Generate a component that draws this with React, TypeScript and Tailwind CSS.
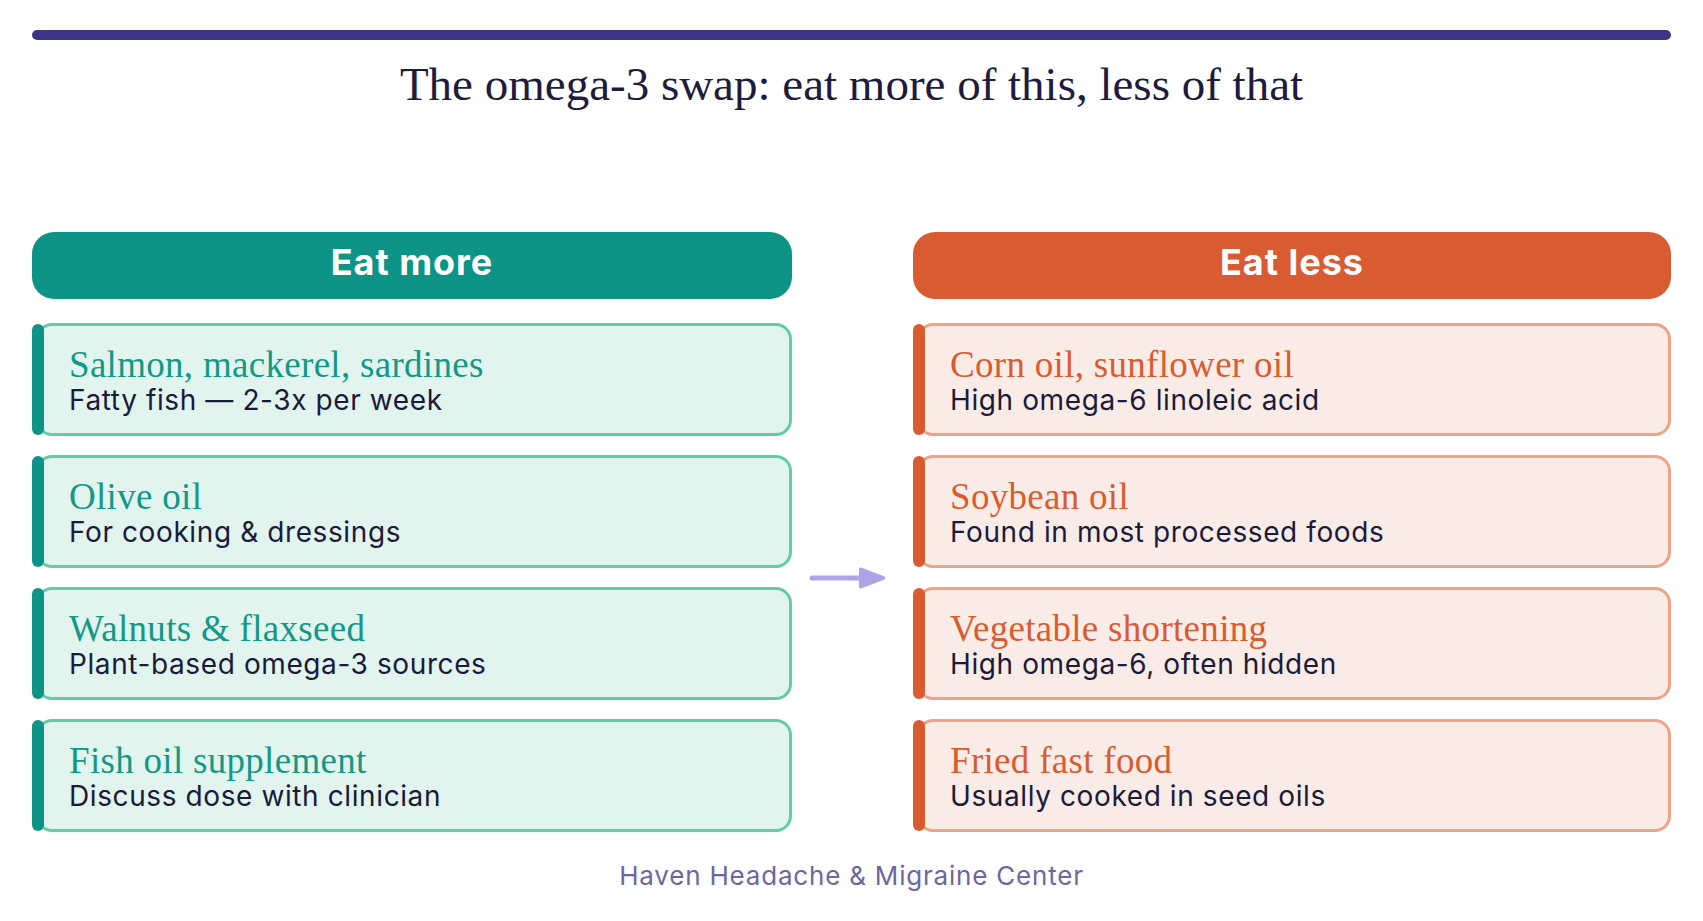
const serif = { fontFamily: '"Liberation Serif", "DejaVu Serif", serif' }

type Item = { title: string; note: string }

const moreItems: Item[] = [
  { title: 'Salmon, mackerel, sardines', note: 'Fatty fish — 2-3x per week' },
  { title: 'Olive oil', note: 'For cooking & dressings' },
  { title: 'Walnuts & flaxseed', note: 'Plant-based omega-3 sources' },
  { title: 'Fish oil supplement', note: 'Discuss dose with clinician' },
]

const lessItems: Item[] = [
  { title: 'Corn oil, sunflower oil', note: 'High omega-6 linoleic acid' },
  { title: 'Soybean oil', note: 'Found in most processed foods' },
  { title: 'Vegetable shortening', note: 'High omega-6, often hidden' },
  { title: 'Fried fast food', note: 'Usually cooked in seed oils' },
]

function Card({ item, tone }: { item: Item; tone: 'more' | 'less' }) {
  const more = tone === 'more'
  return (
    <div
      className={`relative h-[113px] ml-[4px] rounded-[16px] border-[3px] flex flex-col justify-center pl-[30px] pt-[4px] ${
        more ? 'bg-[#e1f4ee] border-[#63cca6]' : 'bg-[#f9ebe6] border-[#f0a284]'
      }`}
    >
      {/* accent bar */}
      <span
        className={`absolute left-[-7px] top-[-2px] bottom-[-2px] w-[12px] rounded-[6px] ${
          more ? 'bg-[#0e9486]' : 'bg-[#d95b32]'
        }`}
      />
      <p
        style={serif}
        className={`text-[37px] leading-[37px] tracking-[0.3px] ${more ? 'text-[#139886]' : 'text-[#d95b32]'}`}
      >
        {item.title}
      </p>
      <p className="text-[28px] leading-[34px] tracking-[0.6px] text-[#1c1a3b]">{item.note}</p>
    </div>
  )
}

export default function App() {
  return (
    <div
      className="w-full h-[921px] overflow-hidden bg-white px-[32px]"
      style={{ fontFamily: 'Inter, "Noto Sans", sans-serif' }}
    >
      <div className="mt-[30px] h-[10px] rounded-full bg-[#3b3584]" />

      <h1 style={serif} className="mt-[21px] text-center text-[47px] leading-[47px] text-[#1e1b3d]">
        The omega-3 swap: eat more of this, less of that
      </h1>

      <div className="mt-[124px] grid grid-cols-[760px_1fr_758px]">
        <div className="h-[67px] rounded-[22px] bg-[#0e9486] flex items-center justify-center pb-[7px] text-white text-[36px] font-bold tracking-[1px]">
          Eat more
        </div>
        <div />
        <div className="h-[67px] rounded-[22px] bg-[#d95b32] flex items-center justify-center pb-[7px] text-white text-[36px] font-bold tracking-[1px]">
          Eat less
        </div>

        <div className="mt-[24px] flex flex-col gap-[19px]">
          {moreItems.map(it => (
            <Card key={it.title} item={it} tone="more" />
          ))}
        </div>

        <div className="mt-[24px] flex items-center justify-center pr-[7px]">
          <svg width="80" height="30" viewBox="0 0 80 30" fill="none">
            <path d="M3 15H54" stroke="#ada5e8" strokeWidth="5" strokeLinecap="round" />
            <path d="M52 4.5L75 13.3Q78 15 75 16.7L52 25.5Q50 26 50 24V6Q50 4 52 4.5Z" fill="#ada5e8" />
          </svg>
        </div>

        <div className="mt-[24px] flex flex-col gap-[19px]">
          {lessItems.map(it => (
            <Card key={it.title} item={it} tone="less" />
          ))}
        </div>
      </div>

      <p className="mt-[24px] text-center text-[26px] tracking-[0.8px] text-[#6c679e]">
        Haven Headache &amp; Migraine Center
      </p>
    </div>
  )
}
